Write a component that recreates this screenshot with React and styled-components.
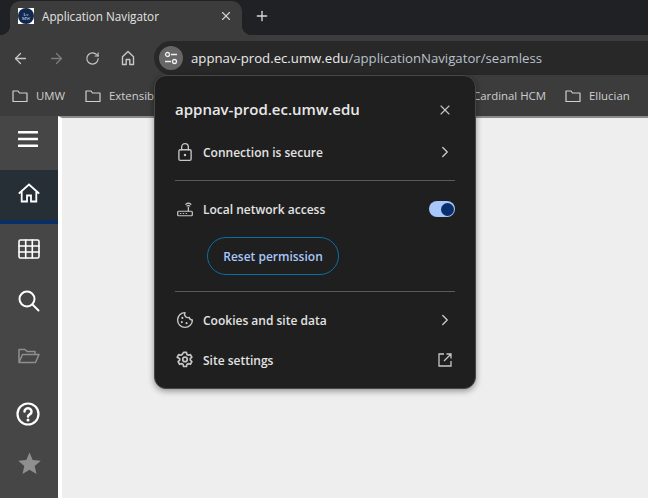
import React from "react";
import styled, { createGlobalStyle } from "styled-components";
import { ArrowLeft, ArrowRight, RotateCw, X, Plus, ChevronRight } from "lucide-react";

const Global = createGlobalStyle`
  html, body { margin: 0; padding: 0; width: 648px; height: 498px; overflow: hidden; background: #eee; }
  * { box-sizing: border-box; }
  body { font-family: "Open Sans", "Noto Sans", sans-serif; }
`;

const Page = styled.div`
  position: relative;
  width: 648px;
  height: 498px;
  display: flex;
  flex-direction: column;
  overflow: hidden;
`;

const TabStrip = styled.div`
  height: 35px;
  flex: none;
  background: #202124;
  display: flex;
  align-items: flex-end;
  padding-left: 10px;
`;

const Tab = styled.div`
  position: relative;
  width: 232px;
  height: 34px;
  background: #3c3c3c;
  border-radius: 10px 10px 0 0;
  display: flex;
  align-items: center;
  padding: 0 9px 5px 8px;
  color: #e3e3e3;
  font-size: 11.7px;
  &::before, &::after {
    content: "";
    position: absolute;
    bottom: 0;
    width: 10px;
    height: 10px;
  }
  &::before { left: -10px; background: radial-gradient(circle at 0 0, transparent 10px, #3c3c3c 10.5px); }
  &::after { right: -10px; background: radial-gradient(circle at 100% 0, transparent 10px, #3c3c3c 10.5px); }
`;

const TabTitle = styled.span`
  flex: 1;
  margin-left: 8px;
  white-space: nowrap;
`;

const NewTab = styled.div`
  margin: 0 0 7px 11px;
  width: 18px;
  height: 24px;
  display: flex;
  align-items: center;
  justify-content: center;
  color: #d8d8d8;
`;

const Toolbar = styled.div`
  height: 40px;
  flex: none;
  background: #3c3c3c;
  display: flex;
  align-items: flex-start;
  padding: 6px 0 0 11px;
`;

const NavButton = styled.div`
  width: 18px;
  height: 34px;
  margin-right: 18px;
  display: flex;
  align-items: center;
  justify-content: center;
  color: ${(p) => (p.$dim ? "#7d7d7d" : "#c7c7c7")};
`;

const Omnibox = styled.div`
  margin-left: -1px;
  flex: 1;
  height: 34px;
  background: #282828;
  border-radius: 17px 0 0 17px;
  display: flex;
  align-items: center;
  padding-left: 5px;
  font-size: 13.2px;
  color: #b9c2cc;
  white-space: nowrap;
`;

const SiteChip = styled.div`
  width: 24px;
  height: 24px;
  border-radius: 50%;
  background: #666;
  margin-right: 8px;
  display: flex;
  align-items: center;
  justify-content: center;
`;

const Host = styled.span`
  color: #eaeaea;
`;

const BookmarkBar = styled.div`
  height: 41px;
  flex: none;
  background: #3c3c3c;
  display: flex;
  align-items: center;
  padding-left: 12px;
  font-size: 11.4px;
  color: #cfcfcf;
`;

const Bookmark = styled.div`
  display: flex;
  align-items: center;
  gap: 8px;
  flex: none;
  width: ${(p) => p.$width}px;
  white-space: nowrap;
`;

const Main = styled.div`
  flex: 1;
  display: flex;
  min-height: 0;
`;

const Sidebar = styled.nav`
  width: 58px;
  flex: none;
  background: #464646;
  display: flex;
  flex-direction: column;
  color: #fff;
`;

const SideItem = styled.div`
  height: ${(p) => p.$h}px;
  padding-bottom: ${(p) => p.$pb || 0}px;
  padding-right: ${(p) => p.$pr || 0}px;
  flex: none;
  display: flex;
  align-items: center;
  justify-content: center;
  color: ${(p) => (p.$dim ? "#8f8f8f" : "#fff")};
  background: ${(p) => (p.$active ? "#262e36" : "transparent")};
  border-bottom: ${(p) => (p.$active ? "4px solid #0a2f66" : "none")};
`;

const Content = styled.main`
  flex: 1;
  background: #eee;
  border-top: 2px solid #8a8a8a;
  border-left: 4px solid #fff;
`;

const Popup = styled.section`
  position: absolute;
  left: 154px;
  top: 75px;
  width: 322px;
  height: 314px;
  background: #1f1f1f;
  border: 1px solid #474747;
  border-radius: 12px;
  box-shadow: 0 2px 6px rgba(0, 0, 0, 0.4);
  padding: 20px 20px 8px;
  display: flex;
  flex-direction: column;
  color: #e3e3e3;
  font-size: 12px;
  font-weight: 600;
`;

const TitleRow = styled.header`
  height: 28px;
  display: flex;
  align-items: center;
  justify-content: space-between;
  font-size: 15px;
  font-weight: 600;
  margin-bottom: 8px;
  color: #e8e8e8;
`;

const TitleText = styled.span`
  margin-top: -2px;
`;

const Row = styled.div`
  height: 40px;
  flex: none;
  display: flex;
  align-items: center;
`;

const RowIcon = styled.div`
  width: 20px;
  height: 20px;
  margin-right: 8px;
  display: flex;
  align-items: center;
  justify-content: center;
  color: #c7c7c7;
`;

const RowLabel = styled.span`
  flex: 1;
`;

const TrailIcon = styled.div`
  width: 20px;
  height: 20px;
  display: flex;
  align-items: center;
  justify-content: center;
  color: #c7c7c7;
`;

const Divider = styled.hr`
  height: 1px;
  border: 0;
  margin: ${(p) => p.$m};
  background: #5a5a5a;
  flex: none;
`;

const Toggle = styled.div`
  width: 26px;
  height: 16px;
  border-radius: 8px;
  background: #a8c7fa;
  display: flex;
  align-items: center;
  justify-content: flex-end;
  padding-right: 1.5px;
`;

const Knob = styled.div`
  width: 13px;
  height: 13px;
  border-radius: 50%;
  background: #0a2f6e;
`;

const ResetButton = styled.button`
  align-self: flex-start;
  margin: 8px 0 0 32px;
  width: 132px;
  height: 38px;
  border-radius: 19px;
  border: 1px solid #0b6ea5;
  background: transparent;
  color: #a8c7fa;
  font: 600 12px "Open Sans", "Noto Sans", sans-serif;
  padding: 0;
`;

const Svg = ({ w = 20, h = 20, vb = "0 0 20 20", sw = 1.5, children }) => (
  <svg width={w} height={h} viewBox={vb} fill="none" stroke="currentColor" strokeWidth={sw} strokeLinecap="round" strokeLinejoin="round">
    {children}
  </svg>
);

const FolderIcon = () => (
  <Svg w={16} h={16} vb="0 0 16 16" sw={1.2}>
    <path d="M1 3h5l1.500 2H15v8.500H1z" />
  </Svg>
);

const HomeSmall = () => (
  <Svg w={16} h={16} vb="0 0 16 16" sw={1.4}>
    <path d="M2.500 6.800 8 1.500l5.500 5.300V14.500h-3.700V9.500H6.200V14.500H2.500z" />
  </Svg>
);

const SiteIcon = () => (
  <svg width="16" height="16" viewBox="0 0 16 16" fill="none" stroke="#eee" strokeWidth="1.3">
    <circle cx="4.500" cy="4.500" r="2" />
    <path d="M8 4.500h6M2 11.500h6" />
    <circle cx="11.500" cy="11.500" r="2" />
  </svg>
);

const Logo = () => (
  <svg width="16" height="16" viewBox="0 0 16 16">
    <rect width="16" height="16" fill="#fff" />
    <circle cx="8" cy="8" r="8" fill="#12284f" />
    <text x="8" y="7.500" fontSize="4.500" fill="#dfe6f2" textAnchor="middle" fontFamily="Liberation Serif">Lv</text>
    <text x="8" y="12" fontSize="4.500" fill="#dfe6f2" textAnchor="middle" fontFamily="Liberation Serif">MW</text>
  </svg>
);

const LockIcon = () => (
  <Svg w={18} h={20} vb="0 0 16 18" sw={1.2}>
    <rect x="2.500" y="7" width="11" height="9.500" rx="1.200" />
    <path d="M5 7V4.500a3 3 0 0 1 6 0V7" />
    <circle cx="8" cy="11.700" r="1.100" fill="currentColor" stroke="none" />
  </Svg>
);

const RouterIcon = () => (
  <Svg w={18} h={18} vb="0 0 16 16" sw={1.1}>
    <rect x="1.500" y="10" width="13" height="4" rx="0.800" />
    <path d="M11 10V6.500M8.800 3.800a3.200 3.200 0 0 1 4.400 0M9.800 5.300a1.700 1.700 0 0 1 2.400 0" />
    <path d="M4 12h.3M6.500 12h.3M9 12h.3" />
  </Svg>
);

const CookieIcon = () => (
  <Svg w={18} h={18} vb="0 0 17 17" sw={1.3}>
    <path d="M8.500 1.500a7 7 0 1 0 7 7 3 3 0 0 1-3-2.500 3.200 3.200 0 0 1-4-4.500z" />
    <circle cx="6" cy="6.500" r="1" fill="currentColor" stroke="none" />
    <circle cx="5.500" cy="10.500" r="1" fill="currentColor" stroke="none" />
    <circle cx="10" cy="11.500" r="1" fill="currentColor" stroke="none" />
  </Svg>
);

const GearIcon = () => (
  <Svg w={18} h={18} vb="0 0 16 16" sw={1.5}>
    <path d="M6.700 1.200h2.600l.4 1.900 1.300.7 1.800-.6 1.300 2.300-1.400 1.300v1.400l1.400 1.300-1.300 2.300-1.800-.6-1.300.7-.4 1.900H6.700l-.4-1.900-1.300-.7-1.800.6-1.300-2.300 1.400-1.300V6.800L1.100 5.500l1.300-2.300 1.800.6 1.300-.7z" />
    <circle cx="8" cy="7.500" r="2" />
  </Svg>
);

const ExternalIcon = () => (
  <Svg w={16} h={16} vb="0 0 16 16" sw={1.3}>
    <path d="M7 2H2v12h12V9M9.500 2H14v4.500M14 2 7 9" strokeLinecap="butt" strokeLinejoin="miter" />
  </Svg>
);

const Hamburger = () => (
  <svg width="20" height="16" viewBox="0 0 20 16" fill="#fff">
    <rect x="0" y="0" width="20" height="2.500" rx="0.500" />
    <rect x="0" y="6.800" width="20" height="2.500" rx="0.500" />
    <rect x="0" y="13.500" width="20" height="2.500" rx="0.500" />
  </svg>
);

const SideHome = () => (
  <Svg w={22} h={20} vb="0 0 22 20" sw={1.8}>
    <path d="M1.500 10 11 1.500l9.500 8.500M3.700 8.500V18.500h5.300V12.500h4V18.500h5.300V8.500" strokeLinecap="square" strokeLinejoin="miter" />
  </Svg>
);

const SideGrid = () => (
  <Svg w={22} h={20} vb="0 0 22 20" sw={1.6}>
    <rect x="1" y="1" width="20" height="18" rx="1.500" />
    <path d="M7.700 1v18M14.300 1v18M1 7h20M1 13h20" />
  </Svg>
);

const SideSearch = () => (
  <Svg w={22} h={22} vb="0 0 22 22" sw={2}>
    <circle cx="9" cy="9" r="7.500" />
    <path d="m14.500 14.500 6 6" />
  </Svg>
);

const SideFolder = () => (
  <Svg w={22} h={16} vb="0 0 22 16" sw={1.5}>
    <path d="M1 14.500V1.500h6l2 2h8v2.500M1 14.500 4.500 6.500H21l-3.500 8z" />
  </Svg>
);

const SideHelp = () => (
  <svg width="24" height="24" viewBox="0 0 24 24" fill="none" stroke="#fff" strokeWidth="2.2" strokeLinecap="round">
    <circle cx="12" cy="12" r="10.500" />
    <path d="M8.500 9.500a3.500 3.200 0 1 1 5.500 2.600c-1.300.9-2 1.400-2 2.400" strokeWidth="2.500" />
    <circle cx="12" cy="18" r="1.500" fill="#fff" stroke="none" />
  </svg>
);

const SideStar = () => (
  <svg width="23" height="22" viewBox="0 0 23 22" fill="#8f8f8f">
    <path d="M11.500 0.500 14.700 8 22.800 8.700 16.700 14 18.500 22 11.500 17.800 4.500 22 6.300 14 .2 8.700 8.300 8z" />
  </svg>
);

export default function App() {
  return (
    <>
      <Global />
      <Page>
        <TabStrip>
          <Tab>
            <Logo />
            <TabTitle>Application Navigator</TabTitle>
            <X size={14} color="#d0d0d0" strokeWidth={2} />
          </Tab>
          <NewTab>
            <Plus size={16} strokeWidth={2} />
          </NewTab>
        </TabStrip>
        <Toolbar>
          <NavButton><ArrowLeft size={17} strokeWidth={1.8} /></NavButton>
          <NavButton $dim><ArrowRight size={17} strokeWidth={1.8} /></NavButton>
          <NavButton><RotateCw size={15} strokeWidth={1.8} /></NavButton>
          <NavButton><HomeSmall /></NavButton>
          <Omnibox>
            <SiteChip><SiteIcon /></SiteChip>
            <Host>appnav-prod.ec.umw.edu</Host>/applicationNavigator/seamless
          </Omnibox>
        </Toolbar>
        <BookmarkBar>
          <Bookmark $width={73}><FolderIcon />UMW</Bookmark>
          <Bookmark $width={364}><FolderIcon />Extensibility</Bookmark>
          <Bookmark $width={116}><FolderIcon />Cardinal HCM</Bookmark>
          <Bookmark $width={80}><FolderIcon />Ellucian</Bookmark>
        </BookmarkBar>
        <Main>
          <Sidebar>
            <SideItem $h={54} $pb={8} $pr={2}><Hamburger /></SideItem>
            <SideItem $h={54} $pb={4} $active><SideHome /></SideItem>
            <SideItem $h={49}><SideGrid /></SideItem>
            <SideItem $h={56}><SideSearch /></SideItem>
            <SideItem $h={54} $dim><SideFolder /></SideItem>
            <SideItem $h={62} $pr={2}><SideHelp /></SideItem>
            <SideItem $h={36} $dim><SideStar /></SideItem>
          </Sidebar>
          <Content />
        </Main>
        <Popup>
          <TitleRow>
            <TitleText>appnav-prod.ec.umw.edu</TitleText>
            <TrailIcon><X size={16} strokeWidth={1.6} /></TrailIcon>
          </TitleRow>
          <Row>
            <RowIcon><LockIcon /></RowIcon>
            <RowLabel>Connection is secure</RowLabel>
            <TrailIcon><ChevronRight size={18} strokeWidth={1.8} /></TrailIcon>
          </Row>
          <Divider $m="8px 0" />
          <Row>
            <RowIcon><RouterIcon /></RowIcon>
            <RowLabel>Local network access</RowLabel>
            <Toggle><Knob /></Toggle>
          </Row>
          <ResetButton>Reset permission</ResetButton>
          <Divider $m="16px 0 8px" />
          <Row>
            <RowIcon><CookieIcon /></RowIcon>
            <RowLabel>Cookies and site data</RowLabel>
            <TrailIcon><ChevronRight size={18} strokeWidth={1.8} /></TrailIcon>
          </Row>
          <Row>
            <RowIcon><GearIcon /></RowIcon>
            <RowLabel>Site settings</RowLabel>
            <TrailIcon><ExternalIcon /></TrailIcon>
          </Row>
        </Popup>
      </Page>
    </>
  );
}
